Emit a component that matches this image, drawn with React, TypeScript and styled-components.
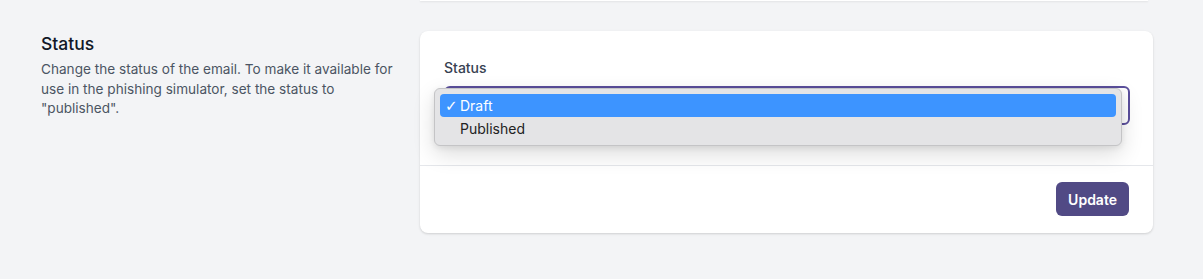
import React from "react";
import styled, { createGlobalStyle } from "styled-components";

const GlobalStyle = createGlobalStyle`
  html, body {
    margin: 0;
    padding: 0;
    background: #f3f4f6;
    font-family: Inter, "Noto Sans", sans-serif;
    -webkit-font-smoothing: antialiased;
  }
`;

const Page = styled.div`
  width: 1203px;
  height: 279px;
  overflow: hidden;
  background: #f3f4f6;
`;

const PrevRow = styled.div`
  display: grid;
  grid-template-columns: 347px 1fr;
  column-gap: 32px;
  padding: 0 50px 0 41px;
`;

const PrevCard = styled.div`
  grid-column: 2;
  height: 1px;
  margin-right: 5px;
  background: #ffffff;
  box-shadow: 0 1px 2px rgba(0, 0, 0, 0.1);
`;

const Section = styled.div`
  display: grid;
  grid-template-columns: 347px 1fr;
  column-gap: 32px;
  padding: 30px 50px 0 41px;
`;

const Intro = styled.div`
  padding-top: 1px;
`;

const Heading = styled.h3`
  margin: 0;
  font-size: 17.5px;
  line-height: 24px;
  font-weight: 500;
  color: #111827;
`;

const Description = styled.p`
  margin: 4px 0 0;
  width: 360px;
  font-size: 13.6px;
  line-height: 19.5px;
  color: #4b5563;
`;

const Card = styled.div`
  background: #ffffff;
  border-radius: 8px;
  box-shadow: 0 1px 3px rgba(0, 0, 0, 0.1), 0 1px 2px rgba(0, 0, 0, 0.06);
`;

const CardBody = styled.div`
  padding: 27px 23px 40px 24px;
`;

const Label = styled.label`
  display: block;
  font-size: 14px;
  line-height: 20px;
  font-weight: 500;
  color: #374151;
`;

const SelectWrap = styled.div`
  position: relative;
  margin-top: 8px;
`;

const SelectBox = styled.div`
  height: 39px;
  box-sizing: border-box;
  border: 2px solid #5b4f9c;
  border-radius: 6px;
  background: #ffffff;
`;

const Menu = styled.ul`
  position: absolute;
  left: -10px;
  top: 2px;
  width: 688px;
  box-sizing: border-box;
  margin: 0;
  padding: 5px;
  list-style: none;
  background: #e4e4e6;
  border: 1px solid #c4c4c6;
  border-radius: 6px;
  box-shadow: 0 8px 22px rgba(0, 0, 0, 0.14), 0 2px 6px rgba(0, 0, 0, 0.08);
`;

const Option = styled.li<{ $active?: boolean }>`
  display: flex;
  align-items: center;
  height: 23px;
  padding-left: 5px;
  border-radius: 4px;
  font-size: 14px;
  color: ${(p) => (p.$active ? "#ffffff" : "#222222")};
  background: ${(p) => (p.$active ? "#3d94ff" : "transparent")};
`;

const Check = styled.span`
  width: 15px;
  font-size: 15px;
  font-family: "DejaVu Sans", sans-serif;
`;

const CardFooter = styled.div`
  display: flex;
  justify-content: flex-end;
  padding: 16px 24px 17px;
  border-top: 1px solid #e5e7eb;
`;

const Button = styled.button`
  height: 34px;
  padding: 0 12px;
  border: none;
  border-radius: 6px;
  background: #514a85;
  color: #ffffff;
  font-family: inherit;
  font-size: 14px;
  font-weight: 600;
`;

export default function App() {
  return (
    <Page>
      <GlobalStyle />
      <PrevRow>
        <PrevCard />
      </PrevRow>
      <Section>
        <Intro>
          <Heading>Status</Heading>
          <Description>
            Change the status of the email. To make it available for use in the
            phishing simulator, set the status to "published".
          </Description>
        </Intro>
        <Card>
          <CardBody>
            <Label>Status</Label>
            <SelectWrap>
              <SelectBox />
              <Menu>
                <Option $active>
                  <Check>✓</Check>Draft
                </Option>
                <Option>
                  <Check />Published
                </Option>
              </Menu>
            </SelectWrap>
          </CardBody>
          <CardFooter>
            <Button>Update</Button>
          </CardFooter>
        </Card>
      </Section>
    </Page>
  );
}
